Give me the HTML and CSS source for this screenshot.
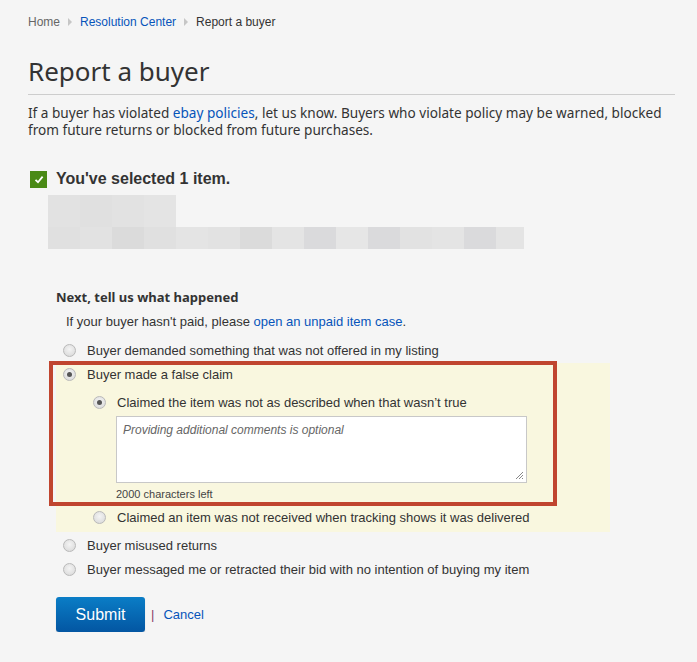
FILE: index.html
```html
<!DOCTYPE html>
<html>
<head>
<meta charset="utf-8">
<link rel="stylesheet" href="styles.css">
</head>
<body>
<div class="page">
  <nav class="crumbs">
    <span class="crumb-home">Home</span>
    <span class="sep"></span>
    <a class="crumb-link">Resolution Center</a>
    <span class="sep"></span>
    <span class="crumb-cur">Report a buyer</span>
  </nav>
  <h1 class="title">Report a buyer</h1>
  <p class="intro">If a buyer has violated <a class="link">ebay policies</a>, let us know. Buyers who violate policy may be warned, blocked from future returns or blocked from future purchases.</p>

  <div class="selected">
    <span class="check"><svg width="10" height="9" viewBox="0 0 10 9"><path d="M1.5 4.8 L4 7.2 L8.6 1.6" fill="none" stroke="#fff" stroke-width="1.8"/></svg></span>
    <span class="selected-text">You've selected 1 item.</span>
  </div>

  <div class="blur">
    <div class="blur-top"><span class="c a"></span><span class="c b"></span><span class="c a"></span><span class="c e"></span></div>
    <div class="blur-row">
      <span class="c b"></span><span class="c a"></span><span class="c d"></span><span class="c b"></span><span class="c e"></span><span class="c a"></span><span class="c d"></span><span class="c e"></span><span class="c f"></span><span class="c g"></span><span class="c f"></span><span class="c a"></span><span class="c e"></span><span class="c f"></span><span class="c short e"></span>
    </div>
  </div>

  <div class="form">
    <h2 class="next">Next, tell us what happened</h2>
    <p class="unpaid">If your buyer hasn't paid, please <a class="link">open an unpaid item case</a>.</p>

    <div class="opt first"><span class="radio"></span><span>Buyer demanded something that was not offered in my listing</span></div>

    <div class="claim">
      <div class="opt top"><span class="radio on"></span><span>Buyer made a false claim</span></div>
      <div class="sub">
        <div class="opt"><span class="radio on"></span><span>Claimed the item was not as described when that wasn’t true</span></div>
        <div class="comment">
          <div class="textarea"><span class="ph">Providing additional comments is optional</span><svg class="grip" width="9" height="9" viewBox="0 0 9 9"><path d="M8 1 L1 8 M8 4 L4 8 M8 7 L7 8" stroke="#888" stroke-width="1"/></svg></div>
          <div class="left">2000 characters left</div>
        </div>
        <div class="opt"><span class="radio"></span><span>Claimed an item was not received when tracking shows it was delivered</span></div>
      </div>
      <div class="highlight"></div>
    </div>

    <div class="opt"><span class="radio"></span><span>Buyer misused returns</span></div>
    <div class="opt"><span class="radio"></span><span>Buyer messaged me or retracted their bid with no intention of buying my item</span></div>

    <div class="actions">
      <button class="submit">Submit</button>
      <span class="pipe">|</span>
      <a class="link cancel">Cancel</a>
    </div>
  </div>
</div>
</body>
</html>
```

FILE: styles.css
```css
html, body {
  margin: 0;
  padding: 0;
  background: #f5f5f5;
}
body {
  font-family: "Liberation Sans", Arial, sans-serif;
  color: #333;
}
.page {
  padding: 14px 22px 0 28px;
}
.link {
  color: #0654ba;
  text-decoration: none;
}
.crumbs {
  display: flex;
  align-items: center;
  font-size: 12px;
  line-height: 16px;
  height: 16px;
}
.crumb-home { color: #666; }
.crumb-link { color: #0654ba; }
.crumb-cur { color: #333; }
.sep {
  width: 0;
  height: 0;
  border-top: 4px solid transparent;
  border-bottom: 4px solid transparent;
  border-left: 4px solid #c6c6c6;
  margin: 0 8px 0 8px;
}
.title {
  font-family: "Noto Sans", "DejaVu Sans", sans-serif;
  font-weight: normal;
  font-size: 26px;
  line-height: 32px;
  margin: 25px 0 0 0;
  padding-bottom: 7px;
  border-bottom: 1px solid #cdcdcd;
  color: #333;
}
.intro {
  font-family: "Noto Sans", "DejaVu Sans", sans-serif;
  font-size: 13.6px;
  line-height: 17px;
  margin: 9px 0 0 0;
  color: #333;
}
.selected {
  display: flex;
  align-items: center;
  margin: 32px 0 0 2px;
  height: 18px;
}
.check {
  width: 17px;
  height: 17px;
  background: #4a8a16;
  display: flex;
  align-items: center;
  justify-content: center;
  margin-right: 9px;
}
.selected-text {
  font-weight: bold;
  font-size: 16px;
  color: #333;
}
.blur {
  margin: 7px 0 0 20px;
  width: 476px;
}
.blur-top {
  display: flex;
  height: 32px;
}
.blur-row {
  display: flex;
  height: 22px;
}
.c { width: 32px; height: 100%; }
.c.short { width: 28px; }
.c.a { background: #e2e2e2; }
.c.b { background: #e0e0e0; }
.c.d { background: #dbdbdb; }
.c.e { background: #e4e4e4; }
.c.f { background: #dadadc; }
.c.g { background: #e6e6e6; }
.form {
  margin: 40px 0 0 28px;
  width: 554px;
  font-size: 13px;
}
.next {
  font-family: "Noto Sans", "DejaVu Sans", sans-serif;
  font-weight: bold;
  font-size: 13px;
  line-height: 16px;
  margin: 0;
  color: #333;
}
.unpaid {
  margin: 9px 0 0 10px;
  line-height: 16px;
}
.opt {
  display: flex;
  align-items: center;
  height: 24px;
  padding-left: 7px;
  color: #333;
}
.opt.first { margin-top: 8px; }
.opt.top { height: 22px; }
.radio {
  width: 11px;
  height: 11px;
  border-radius: 50%;
  border: 1px solid #b9b9b9;
  background: radial-gradient(circle at 50% 40%, #f4f4f4, #d6d6d6);
  margin-right: 11px;
  flex: none;
  position: relative;
}
.radio.on::after {
  content: "";
  position: absolute;
  left: 3px;
  top: 3px;
  width: 5px;
  height: 5px;
  border-radius: 50%;
  background: #555;
}
.claim {
  position: relative;
  background: #f9f7df;
  margin-top: 1px;
  margin-bottom: 1px;
}
.sub {
  padding-left: 30px;
  padding-top: 5px;
  padding-bottom: 3px;
}
.comment {
  padding-left: 30px;
  padding-top: 2px;
}
.textarea {
  position: relative;
  width: 409px;
  height: 65px;
  background: #fff;
  border: 1px solid #c8c8c8;
}
.ph {
  position: absolute;
  left: 6px;
  top: 6px;
  font-style: italic;
  font-size: 12px;
  color: #666;
}
.grip {
  position: absolute;
  right: 2px;
  bottom: 2px;
}
.left {
  font-size: 11px;
  line-height: 14px;
  margin-top: 4px;
  color: #444;
  height: 18px;
}
.highlight {
  position: absolute;
  left: -7px;
  top: -2px;
  width: 500px;
  height: 137px;
  border: 4px solid #c0452f;
  pointer-events: none;
}
.actions {
  display: flex;
  align-items: center;
  margin-top: 16px;
}
.submit {
  width: 89px;
  height: 35px;
  border: 0;
  border-radius: 3px;
  background: linear-gradient(#0a7dc6, #0356a2);
  color: #fff;
  font-family: "Liberation Sans", Arial, sans-serif;
  font-size: 16px;
  box-shadow: 0 1px 1px rgba(0,0,0,0.2);
  padding: 0;
}
.pipe {
  color: #8a3a6a;
  margin-left: 6px;
  font-size: 13px;
}
.cancel {
  margin-left: 9px;
  font-size: 13px;
}
```
